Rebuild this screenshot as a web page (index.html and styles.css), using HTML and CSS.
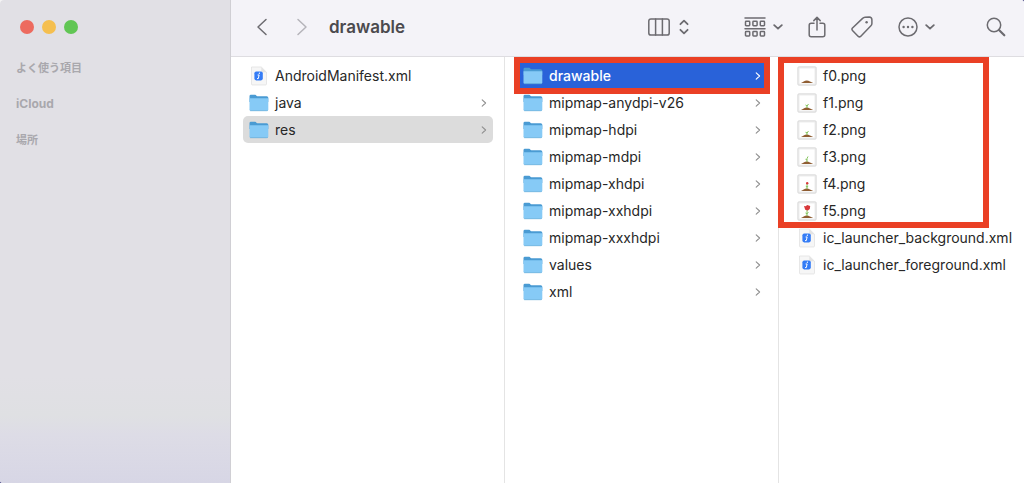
FILE: index.html
```html
<!DOCTYPE html>
<html lang="ja">
<head>
    <meta charset="UTF-8">
    <meta name="viewport" content="width=device-width, initial-scale=1">
    <title>drawable</title>
    <link rel="stylesheet" href="styles.css">
</head>
<body>
    <svg class="sprite" aria-hidden="true">
        <symbol id="folder" viewBox="0 0 20 18">
            <path d="M.5 2.2Q.5.8 1.9.8h4.3c.9 0 1.2 1.4 2.2 1.4h9.3q1.6 0 1.6 1.5V8H.5z" fill="#4a9bd3"/>
            <path d="M.5 4.3h18.8v11.2q0 1.2-1.2 1.2H1.7q-1.2 0-1.2-1.2z" fill="#86caf6"/>
            <path d="M.9 16.2q.3.5 1 .5h16q.7 0 1-.5" fill="none" stroke="#5da9d8" stroke-width=".7"/>
        </symbol>
        <symbol id="xml" viewBox="0 0 20 20">
            <path d="M2.5 1h9.8l5.2 5.2V18q0 1-1 1h-13q-1 0-1-1z" fill="#f6f6f6" stroke="#dedede" stroke-width=".7"/>
            <path d="M12.3 1v4.2q0 1 1 1h4.2z" fill="#e4e4e4"/>
            <rect x="5.4" y="5.4" width="8.4" height="9" rx="1.8" fill="#347cf6"/>
            <path d="M10.4 7l-.1.7M9 9h1.1l-.8 3.6h-.9" fill="none" stroke="#fff" stroke-width="1" stroke-linecap="round"/>
        </symbol>
        <symbol id="picture" viewBox="0 0 20 20">
            <rect x=".8" y=".8" width="18.4" height="18.4" rx="1" fill="#ececec" stroke="#d3d3d3" stroke-width=".7"/>
            <rect x="2.5" y="2.5" width="15" height="15" fill="#fff"/>
            <path d="M4 17q1.5-.6 2.700-1.400Q9.700 13.600 13 15.600q1.500.9 3.200 1.400z" fill="#8f5d32"/>
        </symbol>
        <symbol id="arrow" viewBox="0 0 6 8">
            <path d="M1.200.8L4.600 4 1.200 7.200" fill="none" stroke="currentColor" stroke-width="1.100" stroke-linecap="round" stroke-linejoin="round"/>
        </symbol>
        <symbol id="caret" viewBox="0 0 10 6">
            <path d="M1.200 1.200L5 4.700l3.800-3.500" fill="none" stroke="currentColor" stroke-width="1.800" stroke-linecap="round" stroke-linejoin="round"/>
        </symbol>
    </svg>

    <div class="window">
        <aside class="sidebar">
            <div class="lights">
                <button class="light close" aria-label="閉じる"></button>
                <button class="light minimize" aria-label="しまう"></button>
                <button class="light maximize" aria-label="拡大"></button>
            </div>
            <h2>よく使う項目</h2>
            <h2 class="latin">iCloud</h2>
            <h2>場所</h2>
        </aside>

        <main class="content">
            <header class="toolbar">
                <button class="back" aria-label="戻る">
                    <svg width="12" height="18" viewBox="0 0 12 18"><path d="M10 1.500L2 9l8 7.500"/></svg>
                </button>
                <button class="forward" aria-label="進む">
                    <svg width="12" height="18" viewBox="0 0 12 18"><path d="M2 1.500L10 9l-8 7.500"/></svg>
                </button>
                <h1>drawable</h1>

                <button class="view" aria-label="表示">
                    <svg width="22" height="18" viewBox="0 0 22 18"><rect x=".8" y=".9" width="20.400" height="16.200" rx="2.200"/><path d="M7.600 1v16M14.400 1v16"/></svg>
                    <svg width="10" height="16" viewBox="0 0 10 16" class="bold"><path d="M1.400 5.200L5 1.700l3.600 3.500M1.400 10.800L5 14.300l3.600-3.500"/></svg>
                </button>
                <div class="actions">
                    <button class="group" aria-label="グループ">
                        <svg width="22" height="20" viewBox="0 0 22 20">
                            <path d="M1 1h20M1 11.700h20"/>
                            <rect x="1.500" y="4.200" width="4.200" height="4.500" rx=".7"/>
                            <rect x="8.900" y="4.200" width="4.200" height="4.500" rx=".7"/>
                            <rect x="16.300" y="4.200" width="4.200" height="4.500" rx=".7"/>
                            <rect x="1.500" y="14.500" width="4.200" height="4.500" rx=".7"/>
                            <rect x="8.900" y="14.500" width="4.200" height="4.500" rx=".7"/>
                            <rect x="16.300" y="14.500" width="4.200" height="4.500" rx=".7"/>
                        </svg>
                        <svg width="10" height="6"><use href="#caret"/></svg>
                    </button>
                    <button class="share" aria-label="共有">
                        <svg width="18" height="22" viewBox="0 0 18 22"><path d="M6 7.200H3.200q-2 0-2 2v9.600q0 2 2 2h11.600q2 0 2-2V9.200q0-2-2-2H12M9 14V1.500M5.800 4.600L9 1.400l3.200 3.200"/></svg>
                    </button>
                    <button class="tag" aria-label="タグ">
                        <svg width="22" height="22" viewBox="0 0 22 22"><path d="M1.500 12L11.600 2.400q1-1 2.400-1.100l4.200-.2q2.600.1 2.700 2.700v3.700q0 1.300-1 2.300L9.600 20.400q-1.200 1-2.300 0l-5.800-6q-1.100-1.200 0-2.400z"/><circle cx="15.600" cy="6.300" r="1.200" class="dot"/></svg>
                    </button>
                    <button class="more" aria-label="操作">
                        <svg width="20" height="20" viewBox="0 0 20 20"><circle cx="10" cy="10" r="9"/><g class="dot"><circle cx="5.600" cy="10" r="1.200"/><circle cx="10" cy="10" r="1.200"/><circle cx="14.400" cy="10" r="1.200"/></g></svg>
                        <svg width="10" height="6"><use href="#caret"/></svg>
                    </button>
                </div>
                <button class="search" aria-label="検索">
                    <svg width="20" height="20" viewBox="0 0 20 20"><circle cx="8" cy="8" r="6.700"/><path d="M13 13l5.300 5.300" stroke-width="2.200"/></svg>
                </button>
            </header>

            <div class="columns">
                <ul class="column">
                    <li><a href="#"><svg class="icon"><use href="#xml"/></svg>AndroidManifest.xml</a></li>
                    <li><a href="#"><svg class="icon"><use href="#folder"/></svg>java<svg class="arrow"><use href="#arrow"/></svg></a></li>
                    <li><a href="#" class="open"><svg class="icon"><use href="#folder"/></svg>res<svg class="arrow"><use href="#arrow"/></svg></a></li>
                </ul>

                <ul class="column">
                    <li><a href="#" class="selected"><svg class="icon"><use href="#folder"/></svg>drawable<svg class="arrow"><use href="#arrow"/></svg></a><span class="mark mark-folder"></span></li>
                    <li><a href="#"><svg class="icon"><use href="#folder"/></svg>mipmap-anydpi-v26<svg class="arrow"><use href="#arrow"/></svg></a></li>
                    <li><a href="#"><svg class="icon"><use href="#folder"/></svg>mipmap-hdpi<svg class="arrow"><use href="#arrow"/></svg></a></li>
                    <li><a href="#"><svg class="icon"><use href="#folder"/></svg>mipmap-mdpi<svg class="arrow"><use href="#arrow"/></svg></a></li>
                    <li><a href="#"><svg class="icon"><use href="#folder"/></svg>mipmap-xhdpi<svg class="arrow"><use href="#arrow"/></svg></a></li>
                    <li><a href="#"><svg class="icon"><use href="#folder"/></svg>mipmap-xxhdpi<svg class="arrow"><use href="#arrow"/></svg></a></li>
                    <li><a href="#"><svg class="icon"><use href="#folder"/></svg>mipmap-xxxhdpi<svg class="arrow"><use href="#arrow"/></svg></a></li>
                    <li><a href="#"><svg class="icon"><use href="#folder"/></svg>values<svg class="arrow"><use href="#arrow"/></svg></a></li>
                    <li><a href="#"><svg class="icon"><use href="#folder"/></svg>xml<svg class="arrow"><use href="#arrow"/></svg></a></li>
                </ul>

                <ul class="column files">
                    <li><a href="#"><svg class="icon" viewBox="0 0 20 20"><use href="#picture"/></svg>f0.png</a></li>
                    <li><a href="#"><svg class="icon" viewBox="0 0 20 20"><use href="#picture"/><path class="stem" d="M10 15v-2.500M10 13l-1.500-1M10 13l1.500-2"/></svg>f1.png</a></li>
                    <li><a href="#"><svg class="icon" viewBox="0 0 20 20"><use href="#picture"/><path class="stem" d="M10 15v-3M10 13l-1.500-.7M10 13l1.500-2"/></svg>f2.png</a></li>
                    <li><a href="#"><svg class="icon" viewBox="0 0 20 20"><use href="#picture"/><path class="stem" d="M10 15v-3.500l1-2M10 13l-1.500-.7"/></svg>f3.png</a></li>
                    <li><a href="#"><svg class="icon" viewBox="0 0 20 20"><use href="#picture"/><path class="stem" d="M10 15v-5M10 13l-1.200-.7M10 13l1.200-.7"/><circle class="flower" cx="10.200" cy="9.300" r="1.200"/></svg>f4.png</a></li>
                    <li><a href="#"><svg class="icon" viewBox="0 0 20 20"><use href="#picture"/><path class="stem" d="M10 15V9M10 13l-1.500-1M10 12.500l1.500-1"/><path class="flower" d="M7 5l1.700.3 1.500-1.200 3 .8-.4 3-1.900 1.600-2.700-.8z"/></svg>f5.png</a></li>
                    <li><a href="#"><svg class="icon"><use href="#xml"/></svg>ic_launcher_background.xml</a></li>
                    <li><a href="#"><svg class="icon"><use href="#xml"/></svg>ic_launcher_foreground.xml</a></li>
                    <li class="mark mark-files" aria-hidden="true"></li>
                </ul>
            </div>
        </main>
    </div>
</body>
</html>
```

FILE: styles.css
```css
* {
    box-sizing: border-box;
}
body {
    margin: 0;
    background: linear-gradient(to bottom right, #f4f4f4 20%, #4b4a86 40%);
    color: #272727;
    font-family: Inter, "Noto Sans CJK JP", sans-serif;
    font-size: 14px;
}
h1, h2, ul {
    margin: 0;
    padding: 0;
}
ul {
    list-style: none;
}
button {
    display: flex;
    align-items: center;
    padding: 0;
    border: 0;
    background: none;
    color: #6c6b70;
}
.sprite {
    display: none;
}
.window {
    display: flex;
    min-height: 100vh;
    overflow: hidden;
    border-radius: 4px 3px 0 3px;
    background: #fff;
}

/* sidebar */
.sidebar {
    flex: none;
    width: 231px;
    padding: 20px 16px;
    border-right: 1px solid #d0cfd4;
    background: linear-gradient(#e1e0e5 78%, #dfe0e3 86%, #dddce6 90%, #d7d6e5);
}
.lights {
    display: flex;
    gap: 8px;
    padding-left: 4px;
    margin-bottom: 24px;
}
.light {
    width: 14px;
    height: 14px;
    border-radius: 50%;
}
.close {
    background: #ed6b5f;
}
.minimize {
    background: #f5bf4f;
}
.maximize {
    background: #61c654;
}
.sidebar h2 {
    margin-bottom: 16px;
    color: #a9a8ad;
    font-size: 11px;
    font-weight: 700;
    line-height: 20px;
}
.sidebar .latin {
    font-size: 12px;
}

/* toolbar */
.content {
    display: flex;
    flex: 1;
    flex-direction: column;
    min-width: 0;
}
.toolbar {
    display: flex;
    align-items: center;
    height: 57px;
    padding: 0 18px 3px 25px;
    border-bottom: 1px solid #dedde1;
    background: #f4f3f8;
}
.toolbar svg {
    fill: none;
    stroke: currentColor;
    stroke-width: 1.5;
    stroke-linecap: round;
    stroke-linejoin: round;
}
.toolbar .dot {
    fill: currentColor;
    stroke: none;
}
.toolbar .bold {
    stroke-width: 1.8;
}
.forward {
    margin: 0 21px 0 28px;
    color: #b5b4ba;
}
.toolbar h1 {
    flex: 1;
    color: #4b4a4e;
    font-size: 17px;
    font-weight: 600;
}
.view {
    gap: 9px;
}
.group, .more {
    gap: 7px;
}
.actions {
    display: flex;
    align-items: center;
    gap: 25px;
    margin: 0 51px 0 55px;
}

/* file columns */
.columns {
    display: grid;
    flex: 1;
    grid-template-columns: 274fr 274fr 245fr;
}
.column {
    position: relative;
    min-width: 0;
    padding: 5px 11px 0 12px;
    border-right: 1px solid #e4e4e4;
}
.column.files {
    padding: 5px 0 0 18px;
    border-right: 0;
}
.column a {
    display: flex;
    align-items: center;
    height: 27px;
    padding: 0 6px;
    border-radius: 5px;
    color: inherit;
    text-decoration: none;
    white-space: nowrap;
}
.column.files a {
    padding: 0;
}
.column .open {
    background: #dcdcdc;
}
.column .selected {
    background: #2962d9;
    color: #fff;
    font-weight: 500;
}
.icon {
    flex: none;
    width: 20px;
    height: 20px;
    margin-right: 6px;
}
.arrow {
    width: 6px;
    height: 8px;
    margin-left: auto;
    color: #8f8f8f;
}
.selected .arrow {
    color: #fff;
}
.stem {
    fill: none;
    stroke: #77bd4b;
    stroke-width: .9;
}
.flower {
    fill: #d8383a;
}

/* red frames drawn over the list */
.mark {
    position: absolute;
    border: 6px solid #ea4025;
    pointer-events: none;
}
.mark-folder {
    top: 0;
    right: 8px;
    left: 9px;
    height: 37px;
}
.mark-files {
    top: 0;
    right: 35px;
    left: -1px;
    height: 171px;
}
```
